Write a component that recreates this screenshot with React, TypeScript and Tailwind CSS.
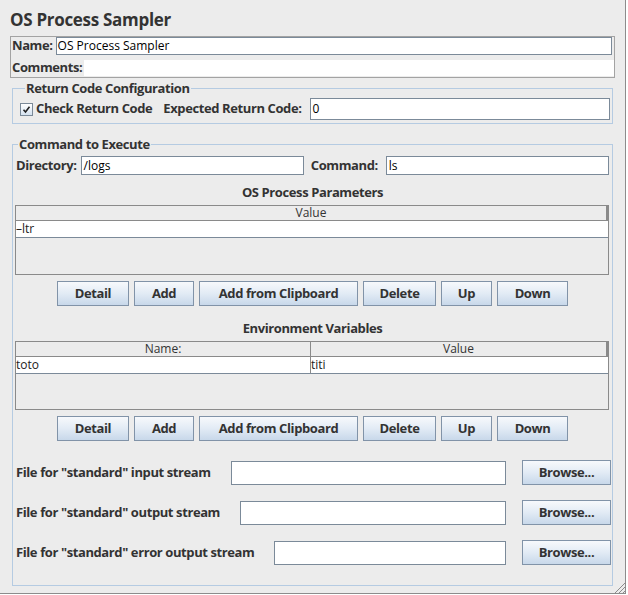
const btn =
  "h-[25px] border border-[#8193a8] bg-gradient-to-b from-[#f7f9fc] via-[#e2ebf5] to-[#c8d8ea] text-[13px] tracking-[-0.4px] font-bold text-[#333] flex items-center justify-center";
const input = "bg-white border border-[#7b8a99]";
const label = "text-[13px] tracking-[-0.4px] font-bold text-[#333] whitespace-nowrap";

function Buttons() {
  return (
    <div className="flex justify-center gap-[5px]">
      <button className={`${btn} w-[72px]`}>Detail</button>
      <button className={`${btn} w-[60px]`}>Add</button>
      <button className={`${btn} w-[159px]`}>Add from Clipboard</button>
      <button className={`${btn} w-[73px]`}>Delete</button>
      <button className={`${btn} w-[51px]`}>Up</button>
      <button className={`${btn} w-[71px]`}>Down</button>
    </div>
  );
}

function FileRow({ text }: { text: string }) {
  return (
    <div className="flex items-center h-[25px] pl-[3px] pr-[1px]">
      <span className={label}>{text}</span>
      <div className={`${input} flex-1 h-[24px] ml-[20px]`} />
      <button className={`${btn} w-[89px] ml-[16px]`}>Browse...</button>
    </div>
  );
}

export default function App() {
  return (
    <div className="w-[628px] h-[595px] bg-white font-['Open_Sans',sans-serif]">
      <div className="relative w-[626px] h-[594px] bg-[#ececec] border-r border-b border-[#8c8c8c] pl-[10px] pt-[8px]">
        <h1 className="h-[24px] leading-[24px] text-[17px] tracking-[-0.3px] font-bold text-[#333]">OS Process Sampler</h1>

        <div className="mt-[4px] w-[605px] h-[42px] border border-[#a3a3a3]">
          <div className="flex items-center h-[18px]">
            <span className={`${label} pl-[1px] mr-[3px]`}>Name:</span>
            <div className={`${input} flex-1 h-[18px] mr-[2px] text-[12px] leading-[16px] pl-[1px]`}>OS Process Sampler</div>
          </div>
          <div className="flex items-center h-[16px] mt-[5px]">
            <span className={`${label} pl-[1px] mr-[2px]`}>Comments:</span>
            <div className="flex-1 h-[16px] bg-white" />
          </div>
        </div>

        <fieldset className="ml-[2px] w-[601px] border border-[#b5cbe2] pl-[7px] pr-[2px] pb-[3px] mt-[1px]">
          <legend className={`${label} ml-[5px] px-[1px] h-[18px] leading-[18px]`}>Return Code Configuration</legend>
          <div className="flex items-center h-[22px] mt-[1px]">
            <div className="w-[13px] h-[13px] border border-[#7b8a99] bg-gradient-to-b from-white to-[#d5e2f0] flex items-center justify-center">
              <svg width="9" height="9" viewBox="0 0 9 9">
                <path d="M1.5 4.8 L3.5 7 L7.5 1.8" stroke="#222" strokeWidth="1.6" fill="none" />
              </svg>
            </div>
            <span className={`${label} ml-[3px]`}>Check Return Code</span>
            <span className={`${label} ml-[11px]`}>Expected Return Code:</span>
            <div className={`${input} flex-1 h-[22px] ml-[8px] text-[12px] leading-[20px] pl-[2px]`}>0</div>
          </div>
        </fieldset>

        <fieldset className="ml-[2px] w-[601px] border border-[#b5cbe2] mt-[11px] pb-[20px]">
          <legend className={`${label} ml-[5px] px-[1px] h-[18px] leading-[18px]`}>Command to Execute</legend>
          <div className="flex items-center h-[19px] mt-[3px] pl-[3px] pr-[3px]">
            <span className={label}>Directory:</span>
            <div className={`${input} flex-1 basis-0 h-[19px] ml-[4px] text-[12px] leading-[17px] pl-[2px]`}>/logs</div>
            <span className={`${label} ml-[7px]`}>Command:</span>
            <div className={`${input} flex-1 basis-0 h-[19px] ml-[8px] text-[12px] leading-[17px] pl-[2px]`}>ls</div>
          </div>

          <div className={`${label} text-center h-[18px] leading-[18px] mt-[8px]`}>OS Process Parameters</div>
          <div className="ml-[2px] mr-[3px] mt-[4px] h-[70px] border border-[#8a8a8a]">
            <div className="h-[15px] border-b border-[#8a8a8a] border-r-2 border-r-[#8a8a8a] text-center text-[12px] leading-[14px] text-[#333]">Value</div>
            <div className="h-[17px] bg-white border-b border-[#7b8a99] text-[12px] leading-[16px] text-[#222]">&#8211;ltr</div>
          </div>
          <div className="mt-[6px]">
            <Buttons />
          </div>

          <div className={`${label} text-center h-[18px] leading-[18px] mt-[13px]`}>Environment Variables</div>
          <div className="ml-[2px] mr-[3px] mt-[4px] h-[69px] border border-[#8a8a8a]">
            <div className="flex h-[15px] border-b border-[#8a8a8a] text-[12px] leading-[14px] text-[#333]">
              <div className="w-[295px] text-center border-r border-[#8a8a8a]">Name:</div>
              <div className="flex-1 text-center border-r-2 border-[#8a8a8a]">Value</div>
            </div>
            <div className="flex h-[17px] bg-white border-b border-[#7b8a99] text-[12px] leading-[16px] text-[#222]">
              <div className="w-[295px] border-r border-[#8a8a8a]">toto</div>
              <div className="flex-1">titi</div>
            </div>
          </div>
          <div className="mt-[6px]">
            <Buttons />
          </div>

          <div className="mt-[19px] flex flex-col gap-[15px]">
            <FileRow text={'File for "standard" input stream'} />
            <FileRow text={'File for "standard" output stream'} />
            <FileRow text={'File for "standard" error output stream'} />
          </div>
        </fieldset>

        <svg className="absolute right-0 bottom-0" width="11" height="11" viewBox="0 0 11 11">
          <path d="M1 11 L11 1 M5 11 L11 5 M9 11 L11 9" stroke="#8c8c8c" strokeWidth="1" />
        </svg>
      </div>
    </div>
  );
}
